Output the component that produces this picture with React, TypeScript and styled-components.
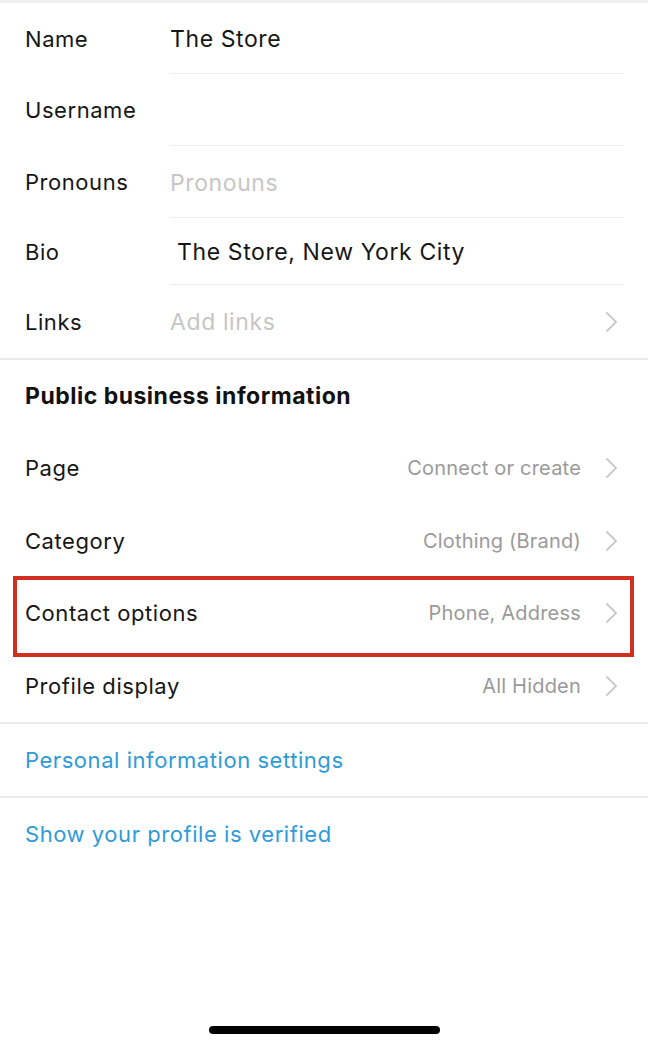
import React from "react";
import styled, { createGlobalStyle } from "styled-components";

const profile_fields = [
  { id: 1, label: "Name", value: "The Store", placeholder: false, height: 71 },
  { id: 2, label: "Username", value: "", placeholder: false, height: 72 },
  { id: 3, label: "Pronouns", value: "Pronouns", placeholder: true, height: 72 },
  { id: 4, label: "Bio", value: "\u00a0The Store, New York City", placeholder: false, height: 67 },
];

const business_rows = [
  { id: 1, label: "Page", value: "Connect or create", marked: false },
  { id: 2, label: "Category", value: "Clothing (Brand)", marked: false },
  { id: 3, label: "Contact options", value: "Phone, Address", marked: true },
  { id: 4, label: "Profile display", value: "All Hidden", marked: false },
];

const Chevron = () => (
  <svg width="13" height="22" viewBox="0 0 13 22" fill="none">
    <path d="M2 2l9 9-9 9" stroke="#c9c9cc" strokeWidth="1.8" strokeLinecap="round" strokeLinejoin="round" />
  </svg>
);

const index = () => {
  return (
    <Container>
      <GlobalStyle />
      <TopStrip />
      <Section>
        {profile_fields.map((field) => (
          <FieldRow key={field.id} style={{ height: field.height }}>
            <Label>{field.label}</Label>
            <FieldValue isPlaceholder={field.placeholder}>{field.value}</FieldValue>
          </FieldRow>
        ))}
        <LinksRow>
          <Label>Links</Label>
          <FieldValue isPlaceholder={true}>Add links</FieldValue>
          <Chevron />
        </LinksRow>
      </Section>
      <Divider />
      <Section>
        <Heading>Public business information</Heading>
        {business_rows.map((row) => (
          <NavRow key={row.id} marked={row.marked}>
            <Label>{row.label}</Label>
            <Detail>{row.value}</Detail>
            <Chevron />
          </NavRow>
        ))}
      </Section>
      <Divider />
      <LinkRow>Personal information settings</LinkRow>
      <Divider />
      <LinkRow>Show your profile is verified</LinkRow>
      <HomeIndicator />
    </Container>
  );
};

const GlobalStyle = createGlobalStyle`
  * {
    box-sizing: border-box;
  }
  body {
    margin: 0;
    background: #ffffff;
    font-family: Inter, "Liberation Sans", Arial, sans-serif;
  }
`;

const Container = styled.main`
  width: 648px;
  min-height: 1047px;
  display: flex;
  flex-direction: column;
  background: #ffffff;
  color: #111111;
`;

const TopStrip = styled.div`
  height: 3px;
  background: #f0f0f0;
`;

const Section = styled.section`
  display: flex;
  flex-direction: column;
`;

const Label = styled.span`
  font-size: 22px;
  letter-spacing: 0.55px;
  color: #161616;
  white-space: nowrap;
`;

const FieldRow = styled.div`
  display: grid;
  grid-template-columns: 145px 1fr;
  align-items: center;
  padding-left: 25px;
  > span:last-child {
    align-self: stretch;
    display: flex;
    align-items: center;
    padding-top: 2px;
    margin-right: 24px;
    border-bottom: 1.5px solid #ececec;
  }
`;

const FieldValue = styled.span<{ isPlaceholder: boolean }>`
  font-size: 23px;
  letter-spacing: 0.6px;
  color: ${({ isPlaceholder }) => (isPlaceholder ? "#c6c6c6" : "#161616")};
`;

const LinksRow = styled.div`
  display: grid;
  grid-template-columns: 145px 1fr auto;
  align-items: center;
  height: 73px;
  padding: 0 30px 0 25px;
`;

const Divider = styled.div`
  height: 2px;
  background: #ebebeb;
`;

const Heading = styled.h2`
  margin: 0;
  height: 72px;
  display: flex;
  align-items: center;
  padding-left: 25px;
  font-size: 23px;
  letter-spacing: 0.5px;
  font-weight: 700;
  color: #111111;
`;

const NavRow = styled.div<{ marked: boolean }>`
  position: relative;
  display: flex;
  align-items: center;
  height: 72.5px;
  padding: 0 30px 0 25px;
  gap: 24px;
  > span:first-child {
    flex: 1;
  }
  ${({ marked }) =>
    marked &&
    `
    &::after {
      content: "";
      position: absolute;
      top: -1px;
      bottom: -7px;
      left: 13px;
      right: 14px;
      border: 4px solid #d0301f;
    }
  `}
`;

const Detail = styled.span`
  font-size: 20px;
  letter-spacing: 0.2px;
  color: #9a9a9a;
`;

const LinkRow = styled.div`
  height: 72px;
  display: flex;
  align-items: center;
  padding-left: 25px;
  font-size: 22px;
  letter-spacing: 0.55px;
  color: #2e9bd8;
`;

const HomeIndicator = styled.div`
  margin: auto auto 13px;
  width: 231px;
  height: 8px;
  border-radius: 4px;
  background: #000000;
`;

export default index;
